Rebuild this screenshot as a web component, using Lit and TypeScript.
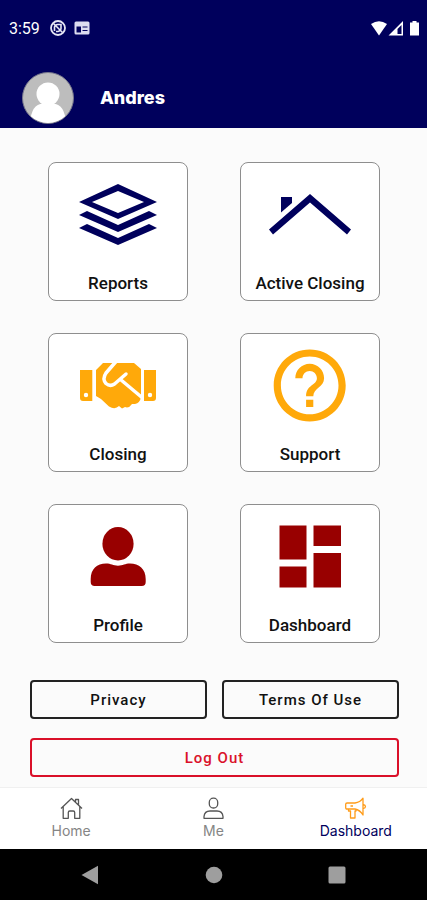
import { LitElement, html, css, svg } from "lit";
import { customElement } from "lit/decorators.js";
import { classMap } from "lit/directives/class-map.js";

const layers = svg`
  <path fill-rule="evenodd" d="M40 9L79 27L40 44L1 27ZM40 16L14 27L40 38L66 27Z"/>
  <path d="M1 40L9 36L40 50L71 36L79 40L40 57Z"/>
  <path d="M1 53L9 49L40 63L71 49L79 53L40 70Z"/>`;

const roof = svg`
  <path d="M40 19L81 54.5L77 59.5L40 27.5L3 59.5L-1 54.5Z"/>
  <path d="M11 22H22V28L11 37.5Z"/>`;

const handshake = svg`
  <path fill-rule="evenodd" d="M2 24H14.3V55H5Q2 55 2 52ZM8 46.8a2.2 2.2 0 1 0 0 4.4a2.2 2.2 0 1 0 0-4.4Z"/>
  <path fill-rule="evenodd" d="M78 24H66V55H75Q78 55 78 52ZM72 46.8a2.2 2.2 0 1 0 0 4.4a2.2 2.2 0 1 0 0-4.4Z"/>
  <path d="M18 24L25 17H56L63 23V51Q62 57 57 58H54Q51 62.500 47 61L44 62.500L41 60Q37 64 31 60.500L23 53L18 50Z"/>
  <path class="cut" d="M38 15.500L28 27Q24 33 28 37.500Q32 41 36.500 38L48 28M42.500 33.500L64 51.500"/>`;

const help = svg`
  <g transform="translate(-3.5 -3.8) scale(3.6)">
    <path d="M11 18h2v-2h-2v2zm1-16C6.48 2 2 6.48 2 12s4.480 10 10 10 10-4.480 10-10S17.520 2 12 2zm0 18c-4.410 0-8-3.590-8-8s3.590-8 8-8 8 3.590 8 8-3.590 8-8 8zm0-14c-2.210 0-4 1.790-4 4h2c0-1.100.9-2 2-2s2 .9 2 2c0 2-3 1.750-3 5h2c0-2.250 3-2.500 3-5 0-2.210-1.790-4-4-4z"/>
  </g>`;

const person = svg`
  <ellipse cx="40" cy="26.7" rx="15.6" ry="16.7"/>
  <path d="M12.7 62C12.7 52 19 46.5 28 46.5C33 46.5 35 48.7 40 48.7S47 46.5 52 46.5C61 46.5 67.7 52 67.7 62V65Q67.7 69 63.7 69H16.7Q12.7 69 12.7 65Z"/>`;

const tiles = svg`
  <path d="M9.5 8.5H36.5V42.5H9.5ZM43.5 8.5H71V29H43.5ZM9.5 49.5H36.5V70.5H9.5ZM43.5 36H71V70.5H43.5Z"/>`;

const homeIcon = svg`
  <path d="M1 11.5L11.5 1.5L22 11.5M3.2 9.7V21.3H8.3V15.5Q8.3 14 9.8 14H13.2Q14.7 14 14.7 15.5V21.3H19.8V9.7M15.5 5.2V2.5H18.5V8"/>`;

const meIcon = svg`
  <rect x="7.3" y="1.2" width="8.4" height="9.8" rx="4"/>
  <path d="M2 21.3V19.5Q2.5 14 8 14H15Q20.5 14 21 19.5V21.3Z"/>`;

const hornIcon = svg`
  <path d="M3 6H11Q16 5.500 19 1.200V18Q16 13 11 12H3Q1.700 12 1.700 10.700V7.300Q1.700 6 3 6ZM19 7.300Q21.500 8 21.500 9.500T19 11.700M4.500 12V14H6.500V21H11V14H12V12.200M6.500 9H9"/>`;

const cards = [
  { label: "Reports", tone: "navy", icon: layers },
  { label: "Active Closing", tone: "navy", icon: roof },
  { label: "Closing", tone: "gold", icon: handshake },
  { label: "Support", tone: "gold", icon: help },
  { label: "Profile", tone: "red", icon: person },
  { label: "Dashboard", tone: "red", icon: tiles },
];

const tabs = [
  { label: "Home", icon: homeIcon, active: false },
  { label: "Me", icon: meIcon, active: false },
  { label: "Dashboard", icon: hornIcon, active: true },
];

@customElement("app-root")
export class AppRoot extends LitElement {
  static styles = css`
    :host {
      display: flex;
      flex-direction: column;
      min-height: 100vh;
      background: #fbfbfb;
      font-family: Roboto, "Liberation Sans", sans-serif;
      color: #111;
    }
    * {
      box-sizing: border-box;
    }
    svg {
      display: block;
      overflow: visible;
    }
    button {
      font: inherit;
      color: inherit;
      cursor: pointer;
    }
    header {
      background: #00005c;
      color: #fff;
    }
    .status {
      display: flex;
      align-items: center;
      justify-content: space-between;
      height: 56px;
      padding: 0 6px 0 9px;
      font-size: 16px;
    }
    .status-group {
      display: flex;
      align-items: center;
      gap: 8px;
    }
    .clock {
      margin-right: 2px;
    }
    .user {
      display: flex;
      align-items: center;
      gap: 26px;
      padding: 16px 22px 4px;
    }
    .name {
      margin: 0;
      font: 800 18px/24px Inter, "Open Sans", sans-serif;
    }
    main {
      flex: 1;
      padding: 34px 0 10px;
    }
    .cards {
      display: grid;
      grid-template-columns: 1fr 1fr;
      justify-items: center;
      row-gap: 32px;
      padding: 0 21px 0 22px;
    }
    .card {
      display: flex;
      flex-direction: column;
      align-items: center;
      gap: 16px;
      width: 140px;
      height: 139px;
      padding: 12px 0;
      border: 1px solid #8e8e8e;
      border-radius: 8px;
      background: #fff;
    }
    .card-label {
      font-size: 17px;
      font-weight: 500;
      line-height: 24px;
      white-space: nowrap;
      color: #111;
    }
    .navy {
      fill: #00005c;
    }
    .gold {
      fill: #ffa90a;
    }
    .red {
      fill: #980000;
    }
    .cut {
      fill: none;
      stroke: #fff;
      stroke-width: 3.5;
      stroke-linecap: round;
      stroke-linejoin: round;
    }
    .actions {
      display: grid;
      grid-template-columns: 1fr 1fr;
      gap: 19px 15px;
      padding: 37px 28px 0 30px;
    }
    .action {
      height: 39px;
      padding: 0;
      border: 2px solid #222;
      border-radius: 4px;
      background: transparent;
      font-size: 15px;
      font-weight: 500;
      letter-spacing: 1px;
    }
    .logout {
      grid-column: 1 / -1;
      border-color: #da1029;
      color: #da1029;
    }
    .tabs {
      display: flex;
      height: 62px;
      border-top: 1px solid #f0f0f0;
      background: #fff;
    }
    .tab {
      flex: 1;
      display: flex;
      flex-direction: column;
      align-items: center;
      gap: 2px;
      padding-top: 9px;
      font: 400 14px/20px Inter, "Open Sans", sans-serif;
      color: #858585;
      text-decoration: none;
    }
    .tab svg {
      fill: none;
      stroke: #555;
      stroke-width: 1.3;
      stroke-linejoin: round;
    }
    .tab.active {
      color: #00005c;
    }
    .tab.active svg {
      stroke: #ff9c1a;
    }
    .system {
      display: flex;
      height: 51px;
      padding: 0 28px;
      background: #000;
    }
    .key {
      flex: 1;
      display: flex;
      align-items: center;
      justify-content: center;
      padding: 0;
      border: 0;
      background: transparent;
      fill: #9e9e9e;
    }
  `;

  render() {
    return html`
      <header>
        <div class="status">
          <div class="status-group">
            <span class="clock">3:59</span>
            <svg width="16" height="16" viewBox="0 0 16 16" fill="none" stroke="#e6e6f4">
              <circle cx="8" cy="8" r="7" stroke-width="1.8" />
              <path d="M4.5 11V7A3.5 3.5 0 0 1 8 4.5H11V8.5A3.5 3.5 0 0 1 8 11.5H6M3.5 3.5L12.5 12.5" stroke-width="1.6" />
            </svg>
            <svg width="16" height="14" viewBox="0 0 16 14" fill="#dcdcf0">
              <path fill-rule="evenodd" d="M2 .5H14Q15.5 .5 15.5 2V12Q15.5 13.500 14 13.500H2Q.5 13.500 .5 12V2Q.5 .5 2 .5ZM2.500 5.500V11.500H7V5.500ZM8.500 5.500V6.500H13.500V5.500ZM8.500 9V10H13.500V9Z" />
            </svg>
          </div>
          <svg width="50" height="15" viewBox="0 0 50 15" fill="#fff">
            <path d="M0 3Q8 -2.5 16 3L8 14.5Z" />
            <path fill-rule="evenodd" d="M32 0V14.5H17.5ZM30.5 4V13H26.5V8Z" />
            <path d="M41.5 0H45.5V1.5H48V14.5H39V1.5H41.5Z" />
          </svg>
        </div>
        <div class="user">
          <svg width="52" height="52" viewBox="0 0 52 52" role="img" aria-label="Avatar">
            <defs>
              <clipPath id="disc"><circle cx="26" cy="26" r="25" /></clipPath>
            </defs>
            <circle cx="26" cy="26" r="25.5" fill="#bdbdbd" stroke="#77778c" />
            <g clip-path="url(#disc)" fill="#fff">
              <circle cx="26" cy="22" r="11.5" />
              <path d="M8 52Q9 32 21 31.5H31Q43 32 44 52Z" />
            </g>
          </svg>
          <h1 class="name">Andres</h1>
        </div>
      </header>
      <main>
        <div class="cards">
          ${cards.map(
            (c) => html`<button class="card">
              <svg class=${c.tone} width="80" height="80" viewBox="0 0 80 80" aria-hidden="true">${c.icon}</svg>
              <span class="card-label">${c.label}</span>
            </button>`
          )}
        </div>
        <div class="actions">
          <button class="action">Privacy</button>
          <button class="action">Terms Of Use</button>
          <button class="action logout">Log Out</button>
        </div>
      </main>
      <nav class="tabs">
        ${tabs.map(
          (t) => html`<a href="#" class=${classMap({ tab: true, active: t.active })}>
            <svg width="23" height="22" viewBox="0 0 23 22" aria-hidden="true">${t.icon}</svg>
            <span>${t.label}</span>
          </a>`
        )}
      </nav>
      <div class="system">
        <button class="key" aria-label="Back">
          <svg width="18" height="20" viewBox="0 0 18 20"><path d="M.5 10L17 .8V19.2Z" /></svg>
        </button>
        <button class="key" aria-label="Home">
          <svg width="18" height="18" viewBox="0 0 18 18"><circle cx="9" cy="9" r="8.3" /></svg>
        </button>
        <button class="key" aria-label="Recents">
          <svg width="18" height="18" viewBox="0 0 18 18"><rect x=".5" y=".5" width="17" height="17" rx="1.5" /></svg>
        </button>
      </div>
    `;
  }
}
